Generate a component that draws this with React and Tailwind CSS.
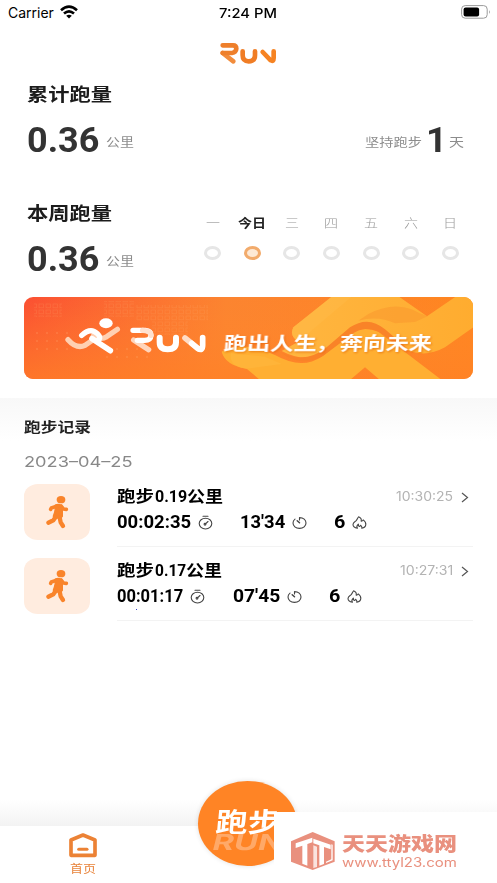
import { useLayoutEffect, useRef } from 'react';

const CJK = "font-['Noto_Sans_CJK_SC',sans-serif]";
const NUM = "font-[Roboto,'Noto_Sans_CJK_SC',sans-serif]";
const UI = "font-[Inter,'Noto_Sans_CJK_SC',sans-serif]";

/* A single line of text stretched to the width of its box. */
function Fit({ className = '', children }) {
  const box = useRef(null);
  const text = useRef(null);
  useLayoutEffect(() => {
    const s = box.current.clientWidth / text.current.offsetWidth;
    text.current.style.transform = `scaleX(${s})`;
  }, []);
  return (
    <div ref={box} className={`shrink-0 whitespace-nowrap ${className}`}>
      <span ref={text} className="inline-block origin-left">{children}</span>
    </div>
  );
}

function StatusBar() {
  return (
    <div className="flex h-[26px] items-center pl-2 text-black">
      <Fit className={`w-[46px] text-[14px] leading-[26px] ${UI}`}>Carrier</Fit>
      <svg className="mb-[2px] ml-[6px] h-[14px] w-[18px]" viewBox="0 0 18 14" fill="none" stroke="#000" strokeWidth="2.6">
        <path d="M1 5.2Q9-2 17 5.2" />
        <path d="M4 8.6q5-4.4 10 0" />
        <path d="M9 13.4 6.2 10.8q2.8-2.2 5.6 0Z" fill="#000" stroke="none" />
      </svg>
      <Fit className={`ml-[141px] w-[58px] text-[13.5px] leading-[26px] font-medium ${UI}`}>7:24 PM</Fit>
      <svg className="mb-[2px] ml-[184px] h-[14px] w-[30px]" viewBox="0 0 30 14">
        <rect x=".6" y=".6" width="25.6" height="12.6" rx="3.6" fill="none" stroke="#9a9a9a" />
        <rect x="2.6" y="2.4" width="15.5" height="9" rx="2" fill="#000" />
        <path d="M28 5q1.6 2 0 4Z" fill="#888" />
      </svg>
    </div>
  );
}

function RunLogo() {
  return (
    <svg className="mt-[13px] ml-[218px] h-[27px] w-[60px]" viewBox="657 115 180 81" fill="none" strokeLinecap="round" strokeLinejoin="round" strokeWidth="14">
      <path d="M671 157 703 182" stroke="#f28c3c" />
      <path d="M671 134H702Q712 134 712 144Q711 156 699 157H671" stroke="#ee7f2b" />
      <path d="M731 152V164Q731 182 749 182Q768 182 768 164V152" stroke="#f07d25" />
      <path d="M791 154 815 179Q824 184 824 172V152" stroke="#f68322" />
    </svg>
  );
}

function Distance({ title }) {
  return (
    <div>
      <Fit className={`w-[85px] text-[18px] leading-[26px] font-bold text-[#1c1c1c] ${CJK}`}>{title}</Fit>
      <div className="flex pt-[15px]">
        <Fit className={`w-[72px] text-[35px] leading-[40px] font-bold text-[#333] ${NUM}`}>0.36</Fit>
        <Fit className={`ml-[7px] w-[28px] pt-[3px] text-[12px] leading-[36px] text-[#8c8c8c] ${CJK}`}>公里</Fit>
      </div>
    </div>
  );
}

const days = ['一', '今日', '三', '四', '五', '六', '日'];

function Week() {
  return (
    <div className="grid w-[277px] grid-cols-7">
      {days.map((d, i) => (
        <div key={d} className="flex flex-col items-center">
          <Fit className={i === 1 ? `w-[28px] text-[12px] leading-[20px] font-bold text-[#222] ${CJK}` : `w-[14px] text-[12px] leading-[20px] font-light text-[#999] ${CJK}`}>{d}</Fit>
          <span className={`mt-[13px] h-[14px] w-[17px] rounded-[50%] border-[3px] ${i === 1 ? 'border-[#f2ab6c] bg-[#fde9d5]' : 'border-[#e6e6e6]'}`} />
        </div>
      ))}
    </div>
  );
}

function Banner() {
  return (
    <div className="relative ml-6 h-[82px] w-[449px] overflow-hidden rounded-[9px] bg-linear-to-r from-[#fb4f32] via-[#fc8430] via-45% to-[#ff851f]">
      <svg className="h-[82px] w-[449px]" viewBox="0 0 449 82">
        <defs>
          <linearGradient id="warm" x1="0" y1="0" x2="0" y2="1">
            <stop offset="0" stopColor="#ff8a2e" stopOpacity="0" />
            <stop offset="1" stopColor="#ff8226" stopOpacity=".75" />
          </linearGradient>
          <linearGradient id="gold" x1="0" y1="0" x2="1" y2="0">
            <stop offset="0" stopColor="#ffb640" />
            <stop offset="1" stopColor="#ffac2f" />
          </linearGradient>
          <pattern id="tiles" width="7" height="6" patternUnits="userSpaceOnUse">
            <rect x="1" y="1" width="4.6" height="3.8" fill="none" stroke="#ffb070" strokeWidth=".6" />
          </pattern>
          <pattern id="specks" width="10" height="8" patternUnits="userSpaceOnUse">
            <circle cx="3" cy="4" r=".8" fill="#ffb780" />
          </pattern>
        </defs>
        <rect width="449" height="82" fill="url(#warm)" />
        <path d="M10 6h28v14H10ZM80 4h30v16H80ZM112 8h72v16h-20v14h-36V24h-16Z" fill="url(#tiles)" opacity=".25" />
        <path d="M10 32h38v26H10ZM75 48h50v18H75Z" fill="url(#specks)" opacity=".4" />
        <g transform="translate(221 -7) scale(.33333)">
          <path d="M-70 185Q-10 150 90 195Q170 240 230 200L310 135Q350 105 400 125L590 270H405L360 232 315 270H45L5 236Q-60 225-70 185Z" fill="#ffaf32" />
          <path d="M5 236Q-50 230-42 190L60 200 110 222Z" fill="#ffb439" />
          <path d="M145 112 260 20H462L546 79 632 20H690V108L600 172Q540 205 480 178L420 130Q370 90 322 115L250 178Q190 225 110 183L160 155Q132 138 145 112Z" fill="url(#gold)" />
          <path d="M370 72Q440 35 500 58Q525 72 548 79L510 96 450 100Q400 76 340 92Z" fill="#fa9a2e" opacity=".6" />
          <path d="M105 185Q180 225 245 172L315 112Q370 75 420 118L490 178 420 137Q365 95 315 137L235 197Q165 235 105 185Z" fill="#f98328" />
          <path d="M145 112 260 20H320L190 130 160 155Q132 138 145 112Z" fill="#ffbb4a" opacity=".45" />
        </g>
        <g transform="translate(-9 -7) scale(.33333)" fill="none" strokeLinecap="round" strokeLinejoin="round">
          <ellipse cx="273" cy="100" rx="20" ry="15" fill="#fff" />
          <path d="M159 149Q185 178 210 166L235 149" stroke="#ffd0b2" strokeWidth="16" />
          <path d="M235 138Q258 151 275 140L307 118" stroke="#ffd0b2" strokeWidth="16" />
          <path d="M200 136Q227 111 247 131Q262 146 245 152" stroke="#fff" strokeWidth="16" />
          <path d="M231 146 286 182" stroke="#fff" strokeWidth="17" />
          <path d="M356 150 401 179" stroke="#ffd5bb" strokeWidth="16" />
          <path d="M354 121H391Q408 122 408 136Q407 151 389 151H367" stroke="#fff" strokeWidth="16" />
          <path d="M383 121Q408 122 408 136" stroke="#ffe1cf" strokeWidth="16" />
          <path d="M434 143V157Q434 178 458 178Q483 178 483 157V143" stroke="#fff" strokeWidth="18" />
          <path d="M510 144 550 176" stroke="#ffdcc5" strokeWidth="17" />
          <path d="M530 160 548 175Q563 185 563 166V143" stroke="#fff" strokeWidth="17" />
        </g>
      </svg>
      <div className="absolute top-[30px] left-[200px] flex -skew-x-[4deg] text-white drop-shadow-[1px_1px_1px_rgba(220,90,0,0.6)]">
        <Fit className={`w-[93px] text-[18.5px] leading-[30px] font-bold ${CJK}`}>跑出人生</Fit>
        <Fit className={`-ml-px w-[24px] text-[18.5px] leading-[30px] font-bold ${CJK}`}>，</Fit>
        <Fit className={`w-[92px] text-[18.5px] leading-[30px] font-bold ${CJK}`}>奔向未来</Fit>
      </div>
    </div>
  );
}

function Stopwatch() {
  return (
    <svg className="mt-px h-[15px] w-[15px]" viewBox="0 0 15 15" fill="none" stroke="#444" strokeWidth="1.1" strokeLinecap="round">
      <ellipse cx="7.5" cy="8.6" rx="6.3" ry="5.4" />
      <path d="M5 1.2h5M7.2 9.2 10 6.5" />
      <circle cx="7" cy="9.2" r=".9" />
    </svg>
  );
}

function Pace() {
  return (
    <svg className="mt-px h-[15px] w-[15px]" viewBox="0 0 15 15" fill="none" stroke="#444" strokeWidth="1.1" strokeLinecap="round">
      <path d="M7.5 2.6V5M7.5 2.6C11.4 2.6 14 5 14 8s-2.7 5.4-6.5 5.4S1 11 1 8Q1 5.6 3 4.1" />
      <path d="m5.2 5.8 2.3 2" strokeWidth="1.5" />
    </svg>
  );
}

function Flame() {
  return (
    <svg className="mt-px h-[15px] w-[15px]" viewBox="0 0 15 15" fill="none" stroke="#444" strokeWidth="1.1" strokeLinejoin="round" strokeLinecap="round">
      <path d="M5.4 13.3C2.7 12.8 1 11.4 1 9.5 1 7.3 2.8 6.8 4 5.8 5.5 4.6 5.2 3 6.6 1.8 9.2 3 9.6 4.5 9.2 6.1 10.5 6.2 10.8 5.6 11.2 4.9 13 6.2 14 7.8 13.8 9.6 13.6 11.6 12 12.8 9.8 13.3 10.4 11.8 9.4 11.2 8.7 10.3 8 11 7.8 11.7 7 11.2 5.9 10.8 6.8 9.7 6.3 9.2 4.7 10.6 4.5 12 5.4 13.3Z" />
    </svg>
  );
}

function Runner() {
  return (
    <svg className="h-[34px] w-[24px]" viewBox="105 58 72 102" fill="none" stroke="#f9842b" strokeLinecap="round" strokeLinejoin="round">
      <ellipse cx="153" cy="72" rx="13" ry="11" fill="#f9842b" stroke="none" />
      <path d="M136 88Q151 82 157 96L157 122 150 130 130 122Q138 101 136 88Z" fill="#f9842b" strokeWidth="4" />
      <path d="M142 91 124 97 122 101M153 91 160 100 169 101" strokeWidth="11" />
      <path d="M137 124 130 134 115 141M149 125 152 140 159 151" strokeWidth="13" />
    </svg>
  );
}

function Run({ km, kmW, time, timeW, gap, pace, paceW, clock, clockW }) {
  return (
    <div className="flex h-[74px] pl-6">
      <div className="flex h-[56px] w-[66px] items-center justify-center rounded-[14px/12px] bg-[#ffecdf]">
        <Runner />
      </div>
      <div className="ml-[27px] h-[63px] w-[356px] border-b border-[#f3f3f3] text-black">
        <div className="flex h-[25px] items-center">
          <Fit className={`w-[37px] pb-[3px] text-[16px] leading-[22px] font-bold ${CJK}`}>跑步</Fit>
          <Fit className={`ml-px ${kmW} pb-px text-[17px] leading-[24px] font-bold ${NUM}`}>{km}</Fit>
          <Fit className={`w-[36px] pb-[3px] text-[16px] leading-[22px] font-bold ${CJK}`}>公里</Fit>
          <Fit className={`ml-auto ${clockW} text-[12.5px] leading-[24px] text-[#b3b3b3] ${UI}`}>{clock}</Fit>
          <svg className="mr-[4px] ml-[7px] h-[12px] w-[9px]" viewBox="0 0 9 12" fill="none" stroke="#555" strokeWidth="1.2">
            <path d="m2 2 5.5 4.5L2 11" />
          </svg>
        </div>
        <div className="flex h-[25px] items-center">
          <Fit className={`${timeW} text-[18px] leading-[25px] font-bold ${NUM}`}>{time}</Fit>
          <div className="ml-[7px]"><Stopwatch /></div>
          <Fit className={`${gap} ${paceW} text-[18px] leading-[25px] font-bold ${NUM}`}>{pace}</Fit>
          <div className="ml-[7px]"><Pace /></div>
          <Fit className={`ml-[27px] w-[11px] text-[18px] leading-[25px] font-bold ${NUM}`}>6</Fit>
          <div className="ml-[7px]"><Flame /></div>
        </div>
      </div>
    </div>
  );
}

function Watermark() {
  return (
    <div className="absolute top-[812px] left-[274px] flex h-[71px] w-[223px] bg-white pl-[16px] text-[#e9907e]">
      <svg className="mt-[19px] h-[41px] w-[46px]" viewBox="60 93 138 123">
        <path d="M128 96 194 124V185L128 210 63 185V124Z" fill="#e9907e" />
        <path d="M77 130 127 113V127L112 132V197L97 191V137L77 144Z" fill="#fff" />
        <path d="M130 116 182 134V148L162 141V192L148 197V136L130 130Z" fill="#fff" />
        <path d="M130 136 141 140V201L130 204Z" fill="#fff" opacity=".75" />
        <path d="M184 133V178L168 185V189L188 181V134Z" fill="#fff" />
      </svg>
      <div className="ml-[6px] pt-[19px]">
        <Fit className={`w-[115px] text-[19px] leading-[24px] font-black ${CJK}`}>天天游戏网</Fit>
        <Fit className="w-[115px] pt-px text-[12.5px] leading-[14px] font-[Inter,sans-serif]">www.ttyl23.com</Fit>
      </div>
    </div>
  );
}

export default function App() {
  return (
    <div className="relative flex h-[883px] w-[497px] flex-col overflow-hidden bg-white">
      <StatusBar />
      <RunLogo />
      <div className="flex h-[119px] justify-between pt-[14px] pr-[33px] pl-[27px]">
        <Distance title="累计跑量" />
        <div className="flex pt-[41px]">
          <Fit className={`w-[57px] pt-[3px] text-[12px] leading-[36px] text-[#8c8c8c] ${CJK}`}>坚持跑步</Fit>
          <Fit className={`ml-[4px] w-[21px] text-[35px] leading-[40px] font-bold text-[#333] ${NUM}`}>1</Fit>
          <Fit className={`ml-[2px] w-[15px] pt-[3px] text-[12px] leading-[36px] text-[#8c8c8c] ${CJK}`}>天</Fit>
        </div>
      </div>
      <div className="flex h-[112px] justify-between pt-[14px] pr-[27px] pl-[27px]">
        <Distance title="本周跑量" />
        <div className="pt-[14px]"><Week /></div>
      </div>
      <Banner />
      <div className="mt-[19px] h-[86px] bg-linear-to-b from-[#f8f8f8] to-white to-50% pt-[16px] pl-6">
        <Fit className={`w-[67px] text-[14px] leading-[25px] font-bold text-[#222] ${CJK}`}>跑步记录</Fit>
        <Fit className={`mt-[11px] w-[108px] text-[15px] leading-[24px] text-[#888] ${UI}`}>2023–04–25</Fit>
      </div>
      <Run km="0.19" kmW="w-[32px]" time="00:02:35" timeW="w-[74px]" gap="ml-[27px]" pace="13'34" paceW="w-[45px]" clock="10:30:25" clockW="w-[57px]" />
      <Run km="0.17" kmW="w-[31px]" time="00:01:17" timeW="w-[66px]" gap="ml-[28px]" pace="07'45" paceW="w-[47px]" clock="10:27:31" clockW="w-[53px]" />
      <span className="absolute top-[609px] left-[136px] h-px w-px bg-[#3344cc]" />
      <div className="mt-auto h-[26px] bg-linear-to-t from-[#f3f3f3] to-white" />
      <div className="flex h-[57px] flex-col pt-[6px] pl-[68px]">
        <svg className="h-[27px] w-[30px]" viewBox="204 187 90 81" fill="none" stroke="#ec8235" strokeLinejoin="round" strokeLinecap="round">
          <path d="M213 211 249 196 285 211V257H213Z" strokeWidth="11" />
          <path d="M236 239H261" strokeWidth="9" />
        </svg>
        <Fit className={`ml-[2px] w-[26px] text-[11px] leading-[19px] text-[#e8843c] ${CJK}`}>首页</Fit>
      </div>
      <div className="absolute top-[781px] left-[198px] h-[85px] w-[99px] rounded-[50%] bg-[#ff8425] shadow-[0_0_5px_rgba(0,0,0,0.12)]">
        <div className="absolute top-[49px] left-[15px] -skew-x-[14deg]">
          <Fit className="w-[70px] text-[22px] leading-[24px] font-bold text-[#ffa968] font-[Inter,sans-serif]">RUN</Fit>
        </div>
        <div className="absolute top-[23px] left-[18px] -skew-x-[5deg]">
          <Fit className={`w-[64px] text-[27px] leading-[34px] font-bold text-white ${CJK}`}>跑步</Fit>
        </div>
      </div>
      <Watermark />
    </div>
  );
}
